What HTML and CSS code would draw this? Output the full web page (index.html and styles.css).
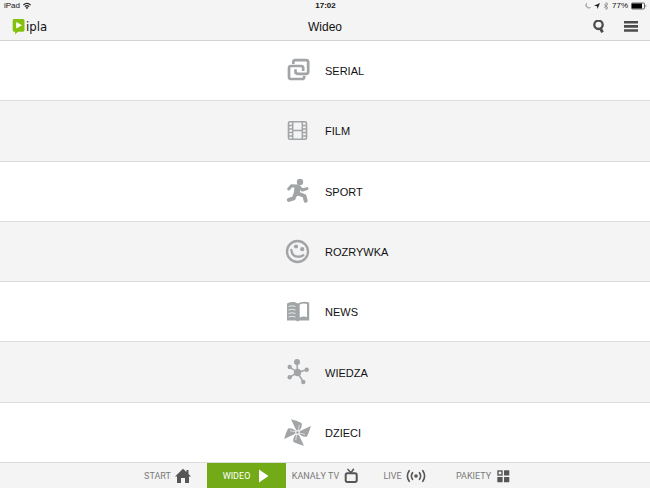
FILE: index.html
```html
<!DOCTYPE html>
<html lang="pl">
<head>
<meta charset="utf-8">
<meta name="viewport" content="width=device-width, initial-scale=1">
<title>ipla – Wideo</title>
<link rel="stylesheet" href="styles.css">
</head>
<body>
<div class="app">
  <header class="top">
    <div class="status">
      <div class="status-left">
        <span>iPad</span>
        <svg width="8" height="8" viewBox="0 0 8 8" fill="none" stroke="#222"><path d="M.4 3Q4-.2 7.600 3M1.800 4.600Q4 2.600 6.200 4.600" stroke-width="1.200"/><path d="M2.700 5.600Q4 4.500 5.300 5.600L4 7.200Z" fill="#222" stroke="none"/></svg>
      </div>
      <span class="clock">17:02</span>
      <div class="status-right">
        <svg width="6" height="8" viewBox="0 0 6 8"><path d="M1.800 1A3 3 0 0 0 5.600 5.400 2.800 2.800 0 1 1 1.800 1Z" fill="#999" stroke="#999" stroke-width=".5"/></svg>
        <svg width="6" height="8" viewBox="0 0 6 8"><path d="M6 1L3.500 7 3 4.200 0 3.800Z" fill="#222"/></svg>
        <svg width="6" height="8" viewBox="0 0 6 8"><path d="M1 2.200L5 5.800 3 7.500V.5L5 2.200 1 5.800" fill="none" stroke="#888" stroke-width=".8"/></svg>
        <span>77%</span>
        <svg width="16" height="8" viewBox="0 0 16 8"><rect x=".5" y="1" width="13" height="6" rx="1" fill="none" stroke="#444" stroke-width=".8"/><rect x="1" y="1.500" width="10" height="5" fill="#000"/><path d="M14.500 3V5L15.500 4Z" fill="#444"/></svg>
      </div>
    </div>
    <div class="bar">
      <a class="logo" href="#" aria-label="ipla">
        <svg width="14" height="16" viewBox="0 0 14 16"><path d="M2 0H11Q12.500 0 12.500 1.500V11Q12.500 12.700 11 12.700H6L3 15.500 3.200 12.700H2Q.7 12.700 .7 11V1.500Q.7 0 2 0Z" fill="#84c10c"/><path d="M4.200 3L10 6.300 4.200 9.500Z" fill="#fff"/></svg>
        <span>ipla</span>
      </a>
      <h1>Wideo</h1>
      <div class="actions">
        <button type="button" aria-label="Szukaj"><svg width="14" height="14" viewBox="0 0 14 14" fill="none" stroke="#4c4c4c"><circle cx="6.500" cy="4.800" r="4.200" stroke-width="2.300"/><path d="M8.300 8L10.500 12.300" stroke-width="2.800"/></svg></button>
        <button type="button" aria-label="Menu"><svg width="14" height="14" viewBox="0 0 14 14" fill="#4c4c4c"><path d="M0 1h14v2.600H0zM0 5.100h14v2.600H0zM0 9.200h14v2.600H0z"/></svg></button>
      </div>
    </div>
  </header>

  <main class="list">
    <a class="row" href="#">
      <svg class="icon" viewBox="0 0 28 28" fill="none" stroke="#a1a5a7" stroke-width="2.700"><path d="M9.300 7V5.100Q9.300 3.100 11.300 3.100H22Q24.200 3.100 24.200 5.100V14.800Q24.200 16.800 22 16.800H14.200Q11.500 16.800 11.500 15V12.300"/><path d="M20.200 18.800V20Q20.200 22 18 22H7.200Q5 22 5 20V11Q5 9 7.200 9H17Q19.200 9 19.200 11V14"/></svg>
      <span>SERIAL</span>
    </a>
    <a class="row" href="#">
      <svg class="icon" viewBox="0 0 28 28" fill="none" stroke="#a1a5a7"><rect x="4.500" y="4.700" width="18" height="17.600" rx="1.500" stroke-width="1.600"/><path d="M8.700 5V22M18.300 5V22M9 13.500H18" stroke-width="1.500"/><path d="M4.500 8.500H8.500M4.500 12H8.500M4.500 15.500H8.500M4.500 19H8.500M18.500 8.500H22.500M18.500 12H22.500M18.500 15.500H22.500M18.500 19H22.500" stroke-width="1.500"/></svg>
      <span>FILM</span>
    </a>
    <a class="row" href="#">
      <svg class="icon" viewBox="0 0 28 28" fill="none" stroke="#a1a5a7" stroke-linecap="round" stroke-linejoin="round"><circle cx="16" cy="4" r="3.200" fill="#a1a5a7" stroke="none"/><path d="M13.500 9.500L12.800 15" stroke-width="6"/><path d="M12.500 8L7.500 7.700 4.700 11M15.500 9.500L18.500 12 23 10.600" stroke-width="3"/><path d="M11.500 16L9.700 20.300 4.800 21.900M14 15.500L20.500 18 21.700 22.800" stroke-width="4"/></svg>
      <span>SPORT</span>
    </a>
    <a class="row" href="#">
      <svg class="icon" viewBox="0 0 28 28" fill="none" stroke="#a1a5a7"><circle cx="13.500" cy="13.500" r="10.500" stroke-width="2.400"/><g fill="#a1a5a7" stroke="none"><circle cx="12" cy="8.500" r="2.100"/><circle cx="18.200" cy="11.200" r="2.100"/></g><path d="M7.300 11.800Q8 18.300 13.500 18.700 16.500 19 19.300 17.300" stroke-width="2.300" stroke-linecap="round"/></svg>
      <span>ROZRYWKA</span>
    </a>
    <a class="row" href="#">
      <svg class="icon" viewBox="0 0 28 28"><path d="M3 5.500Q9 2.700 13.800 5.500 18.500 2.700 25.200 4.500V22.500H15.500L13.800 23.500 12 22.500H3Z" fill="#a1a5a7"/><path d="M15.700 6.500Q19 5 23 5.900V19Q19 18 15.700 19.500Z" fill="#fff"/><path d="M4.500 8.500Q8 7 11.500 8.500M4.500 12Q8 10.500 11.500 12M4.500 15.500Q8 14 11.500 15.500M4.500 19Q8 17.500 11.500 19" fill="none" stroke="#eee" stroke-width=".9"/></svg>
      <span>NEWS</span>
    </a>
    <a class="row" href="#">
      <svg class="icon" viewBox="0 0 28 28" fill="#a1a5a7"><path d="M13.500 13.500L13 3M13.500 13.500L5.700 8M13.500 13.500L5.700 18.200M13.500 13.500L22.700 10.700M13.500 13.500L19.300 23" stroke="#a1a5a7" stroke-width="1.500"/><circle cx="13.500" cy="13.500" r="3.700"/><circle cx="13" cy="3" r="3"/><circle cx="5.700" cy="8" r="2.200"/><circle cx="5.700" cy="18.200" r="2.200"/><circle cx="22.700" cy="10.700" r="2.200"/><circle cx="19.300" cy="23" r="2.200"/></svg>
      <span>WIEDZA</span>
    </a>
    <a class="row" href="#">
      <svg class="icon" viewBox="0 0 28 28"><defs><g id="blade"><path d="M-1.300-2.200L-6.500-13.300Q-1-12 4-9.500 5.200-6 2-2.200Z" fill="#a1a5a7"/><path d="M.8-2.500L1.800-7.500" stroke="#fff" stroke-width=".6"/></g></defs><g transform="translate(13.500 13.500)"><use href="#blade"/><use href="#blade" transform="rotate(90)"/><use href="#blade" transform="rotate(180)"/><use href="#blade" transform="rotate(270)"/><circle r="1.300" fill="#a1a5a7"/></g></svg>
      <span>DZIECI</span>
    </a>
  </main>

  <nav class="tabs">
    <a class="tab" href="#"><span>START</span><svg width="16" height="16" viewBox="0 0 16 16"><path d="M8 .7L11.500 4V2H13.500V6L16 8.500H14V15H10V10H6V15H2V8.500H0Z" fill="#565656"/></svg></a>
    <a class="tab active" href="#" aria-current="page"><span>WIDEO</span><svg width="16" height="16" viewBox="0 0 16 16"><path d="M5 1.500L14.500 8 5 14.500Z" fill="#fff"/></svg></a>
    <a class="tab" href="#"><span>KANAŁY TV</span><svg width="16" height="16" viewBox="0 0 16 16" fill="none" stroke="#565656"><rect x="2.700" y="5.300" width="11" height="8.700" rx="1.700" stroke-width="2"/><path d="M4.500 1L8 4.800 10.800 .8" stroke-width="1.500"/></svg></a>
    <a class="tab" href="#"><span>LIVE</span><svg width="20" height="16" viewBox="0 0 20 16" fill="none" stroke="#565656" stroke-width="1.600" stroke-linecap="round"><circle cx="10" cy="8" r="1.800" fill="#565656" stroke="none"/><path d="M6.500 4.700Q4.300 8 6.500 11.300M13.500 4.700Q15.700 8 13.500 11.300M3.200 2.700Q-.4 8 3.200 13.300M16.800 2.700Q20.400 8 16.800 13.300"/></svg></a>
    <a class="tab" href="#"><span>PAKIETY</span><svg width="16" height="16" viewBox="0 0 16 16" fill="#565656"><rect x="3" y="3" width="4" height="4" fill="none" stroke="#565656" stroke-width="1.400"/><rect x="9" y="2.300" width="5.300" height="5.300" rx=".5"/><rect x="2.300" y="9" width="5.300" height="5.300" rx=".5"/><rect x="9" y="9" width="5.300" height="5.300" rx=".5"/></svg></a>
  </nav>
</div>
</body>
</html>
```

FILE: styles.css
```css
* {
  box-sizing: border-box;
}

body {
  margin: 0;
  font-family: "Liberation Sans", Arial, sans-serif;
  color: #111;
  background: #fff;
}

a {
  color: inherit;
  text-decoration: none;
}

svg {
  display: block;
  flex: none;
}

.app {
  display: flex;
  flex-direction: column;
  min-height: 100vh;
}

.top {
  background: #f4f4f4;
  border-bottom: 1px solid #d2d2d2;
}

.status,
.bar {
  display: grid;
  grid-template-columns: 1fr auto 1fr;
  align-items: center;
}

.status {
  height: 12px;
  padding: 0 3px 0 4px;
  font-size: 8px;
  line-height: 12px;
}

.status-left,
.status-right {
  display: flex;
  align-items: center;
  gap: 3px;
}

.status-right {
  justify-content: flex-end;
}

.clock {
  font-weight: bold;
}

.bar {
  height: 28px;
  padding: 2px 12px 0;
}

.logo {
  display: flex;
  align-items: center;
  font-family: "DejaVu Sans Condensed", "Open Sans", sans-serif;
  font-size: 13px;
  line-height: 14px;
}

h1 {
  margin: 0;
  font-size: 12px;
  line-height: 16px;
  font-weight: normal;
}

.actions {
  display: flex;
  justify-content: flex-end;
  gap: 18px;
}

button {
  padding: 0;
  border: 0;
  background: none;
}

.list {
  flex: 1;
  display: flex;
  flex-direction: column;
}

.row {
  flex: 1;
  display: grid;
  grid-template-columns: 1fr 1fr;
  align-items: center;
  padding-top: 1px;
  border-bottom: 1px solid #dcdcdc;
  font-size: 11px;
  line-height: 16px;
}

.row:nth-child(even) {
  background: #f4f4f4;
}

.icon {
  width: 28px;
  height: 28px;
  margin-right: 13px;
  justify-self: end;
}

.tabs {
  display: flex;
  justify-content: center;
  height: 25px;
  background: #f4f4f4;
}

.tab {
  flex: 0 0 79px;
  display: flex;
  align-items: center;
  justify-content: center;
  gap: 4px;
  padding-left: 1px;
  font-family: Roboto, sans-serif;
  font-size: 9px;
  line-height: 16px;
  color: #7a7a7a;
}

.tab.active {
  background: #72aa18;
  color: #fff;
}
```
